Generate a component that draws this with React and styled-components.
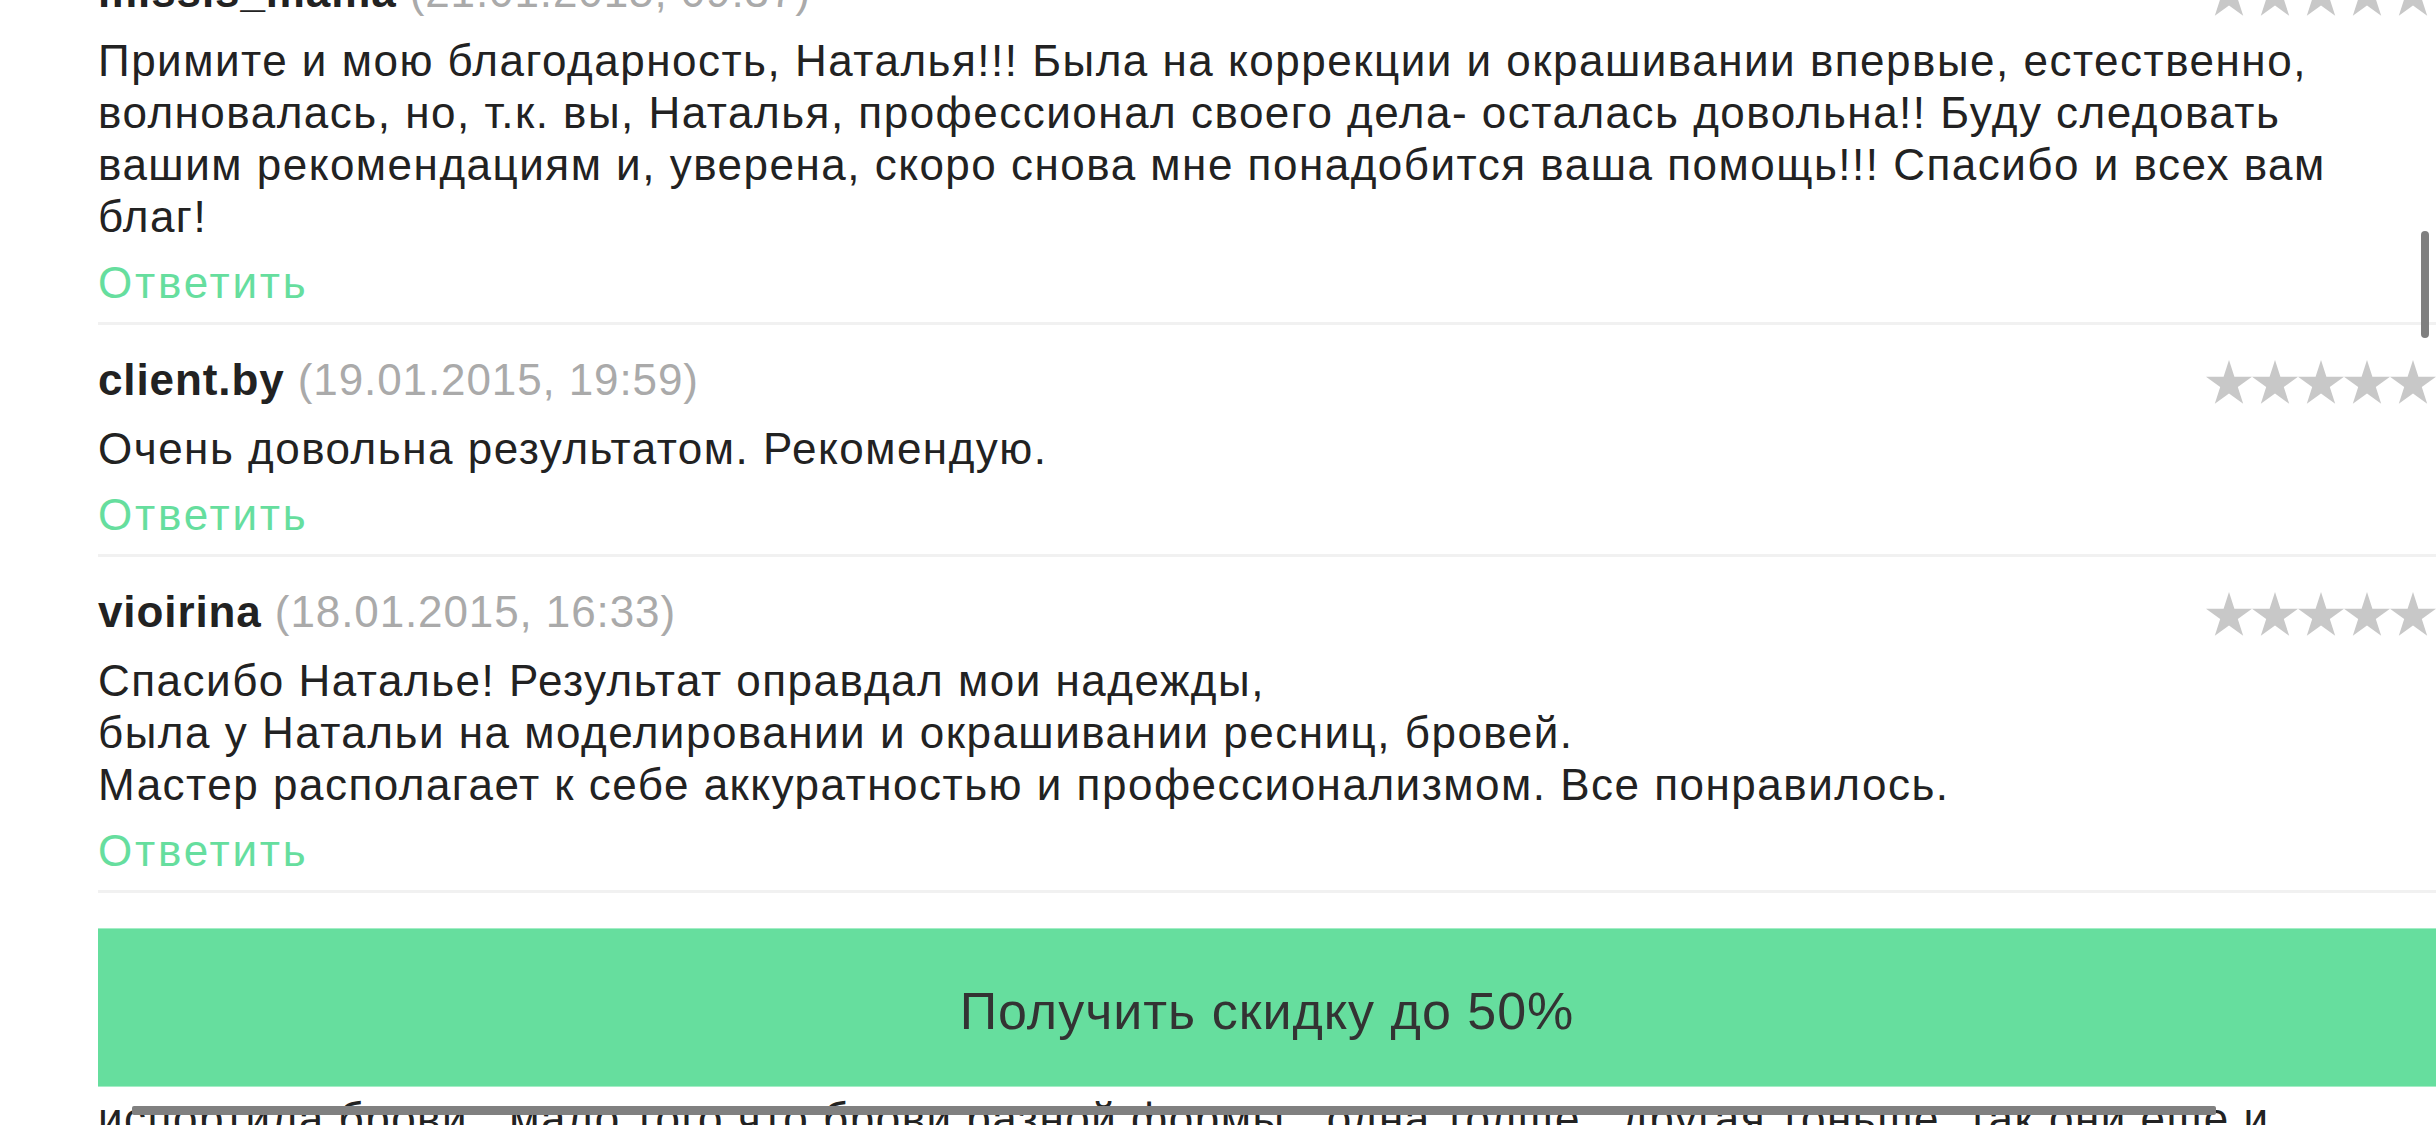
import React from 'react';
import styled, { createGlobalStyle } from 'styled-components';

const GlobalStyle = createGlobalStyle`
  html, body {
    margin: 0;
    padding: 0;
    background: #fff;
    overflow: hidden;
  }

  body {
    font-family: "Liberation Sans", Arial, Helvetica, sans-serif;
    color: #222;
  }
`;

const green = '#66de9e';

const Page = styled.div`
  height: 1125px;
  padding-left: 98px;
  overflow: hidden;
  font-size: 44px;
  line-height: 52px;
`;

const ReviewList = styled.div`
  margin-top: -63px;
`;

const Review = styled.article`
  padding: 29px 0 13px;
  border-bottom: 3px solid #f1f1f1;
`;

const ReviewHeader = styled.header`
  display: flex;
  justify-content: space-between;
  align-items: center;
  height: 52px;
  letter-spacing: 0.9px;
`;

const Author = styled.span`
  font-weight: 700;
  color: #222;
`;

const DateText = styled.span`
  color: #aaa;
`;

const Stars = styled.div`
  display: flex;
  margin-top: 4px;

  svg {
    display: block;
    width: 46px;
    height: 44px;
  }
`;

const Text = styled.p`
  margin: 17px 0 0;
  color: #222;
  letter-spacing: 1.5px;
  white-space: nowrap;
`;

const Reply = styled.a`
  display: block;
  margin-top: 14px;
  color: ${green};
  letter-spacing: 2.8px;
  text-decoration: none;
`;

const DiscountButton = styled.button`
  display: flex;
  justify-content: center;
  align-items: center;
  width: 100%;
  height: 159px;
  margin-top: 35px;
  padding: 6px 0 0;
  border: none;
  border-top: 1px solid #a4edc6;
  border-bottom: 1px solid #a4edc6;
  background: ${green};
  color: #333;
  font-family: inherit;
  font-size: 52px;
  letter-spacing: 1px;
`;

const Excerpt = styled.div`
  position: relative;
  margin-top: 6px;
  letter-spacing: 1.5px;
  white-space: nowrap;
`;

const HScrollBar = styled.div`
  position: absolute;
  top: 13px;
  left: 34px;
  width: 2084px;
  height: 9px;
  border-radius: 2px;
  background: #808080;
`;

const VScrollBar = styled.div`
  position: fixed;
  top: 231px;
  left: 2421px;
  width: 8px;
  height: 107px;
  border-radius: 4px;
  background: #7f7f7f;
`;

const Star = () => (
  <svg viewBox="0 0 46 44">
    <polygon
      fill="#c8c8c8"
      points="23,0 28.4,16.7 46,16.7 31.8,27.1 37.2,43.8 23,33.4 8.8,43.8 14.2,27.1 0,16.7 17.6,16.7"
    />
  </svg>
);

const reviews = [
  {
    author: 'missis_mama',
    date: '21.01.2015, 09:37',
    text: [
      'Примите и мою благодарность, Наталья!!! Была на коррекции и окрашивании впервые, естественно,',
      'волновалась, но, т.к. вы, Наталья, профессионал своего дела- осталась довольна!! Буду следовать',
      'вашим рекомендациям и, уверена, скоро снова мне понадобится ваша помощь!!! Спасибо и всех вам',
      'благ!',
    ],
  },
  {
    author: 'client.by',
    date: '19.01.2015, 19:59',
    text: ['Очень довольна результатом. Рекомендую.'],
  },
  {
    author: 'vioirina',
    date: '18.01.2015, 16:33',
    text: [
      'Спасибо Наталье! Результат оправдал мои надежды,',
      'была у Натальи на моделировании и окрашивании ресниц, бровей.',
      'Мастер располагает к себе аккуратностью и профессионализмом. Все понравилось.',
    ],
  },
];

const App = () => {
  return (
    <>
      <GlobalStyle />
      <Page>
        <ReviewList>
          {reviews.map((r) => (
            <Review key={r.author}>
              <ReviewHeader>
                <div>
                  <Author>{r.author}</Author> <DateText>({r.date})</DateText>
                </div>
                <Stars>
                  {[0, 1, 2, 3, 4].map((i) => (
                    <Star key={i} />
                  ))}
                </Stars>
              </ReviewHeader>
              <Text>
                {r.text.map((line, i) => (
                  <React.Fragment key={i}>
                    {i > 0 && <br />}
                    {line}
                  </React.Fragment>
                ))}
              </Text>
              <Reply href="#">Ответить</Reply>
            </Review>
          ))}
        </ReviewList>
        <DiscountButton>Получить скидку до 50%</DiscountButton>
        <Excerpt>
          испортила брови , мало того что брови разной формы , одна толще , другая тоньше, так они еще и
          <HScrollBar />
        </Excerpt>
      </Page>
      <VScrollBar />
    </>
  );
};

export default App;
